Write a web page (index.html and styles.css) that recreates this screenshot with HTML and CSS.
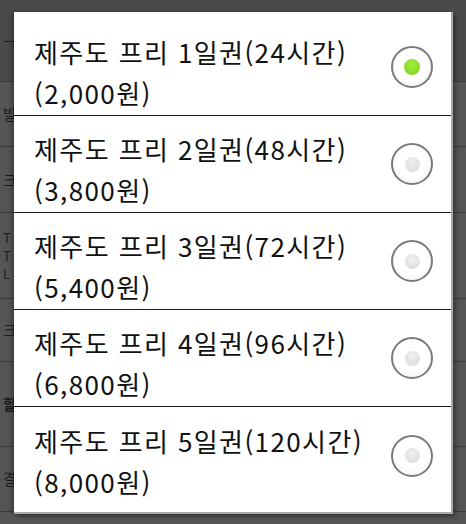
FILE: index.html
```html
<!DOCTYPE html>
<html lang="ko">
<head>
    <meta charset="UTF-8">
    <meta name="viewport" content="width=device-width, initial-scale=1.0">
    <title>제주도 프리 이용권</title>
    <link rel="stylesheet" href="styles.css">
</head>
<body>
    <!-- page behind the dialog, dimmed -->
    <div class="page">
        <div class="page-row row-a"><span>ㅡ</span></div>
        <div class="page-row row-b"><span>발권</span></div>
        <div class="page-row row-c"><span>크기</span></div>
        <div class="page-row row-d"><span>T<br>T<br>L</span></div>
        <div class="page-row row-e"><span>크기</span></div>
        <div class="page-row row-f"><span class="bold">할인</span></div>
        <div class="page-row row-g"><span>결제</span></div>
    </div>

    <div class="dialog">
        <ul class="ticket-list">
            <li class="ticket">
                <p class="ticket-name">제주도 프리 1일권(24시간)<br>(2,000원)</p>
                <span class="radio checked"></span>
            </li>
            <li class="ticket">
                <p class="ticket-name">제주도 프리 2일권(48시간)<br>(3,800원)</p>
                <span class="radio"></span>
            </li>
            <li class="ticket">
                <p class="ticket-name">제주도 프리 3일권(72시간)<br>(5,400원)</p>
                <span class="radio"></span>
            </li>
            <li class="ticket">
                <p class="ticket-name">제주도 프리 4일권(96시간)<br>(6,800원)</p>
                <span class="radio"></span>
            </li>
            <li class="ticket">
                <p class="ticket-name">제주도 프리 5일권(120시간)<br>(8,000원)</p>
                <span class="radio"></span>
            </li>
        </ul>
    </div>
</body>
</html>
```

FILE: styles.css
```css
* {
    margin: 0;
    padding: 0;
    box-sizing: border-box;
}

body {
    width: 466px;
    height: 524px;
    overflow: hidden;
    position: relative;
    background-color: #4b4b4b;
    font-family: "Noto Sans CJK KR", "Noto Sans", sans-serif;
}

/* dimmed page underneath */
.page {
    height: 524px;
    background-color: #555;
}

.page-row {
    display: flex;
    align-items: center;
    padding-left: 3px;
    border-bottom: 1px solid #3a3a3a;
    color: #1e1e1e;
    font-size: 15px;
    line-height: 18px;
}

.page-row .bold {
    font-weight: bold;
}

.row-a { height: 82px; background-color: #4a4a4a; }
.row-b { height: 65px; }
.row-c { height: 66px; }
.row-d { height: 86px; font-size: 13px; }
.row-e { height: 63px; }
.row-f { height: 85px; }
.row-g { height: 65px; }

/* the dialog lies over the page */
.dialog {
    position: absolute;
    left: 14px;
    top: 12px;
    width: 439px;
    height: 502px;
    background-color: #fff;
    border-right: 2px solid #a9a9a9;
    border-bottom: 2px solid #a9a9a9;
    box-shadow: -3px 0 4px rgba(0, 0, 0, 0.25), 3px 3px 4px rgba(0, 0, 0, 0.3);
}

.ticket-list {
    list-style: none;
    padding: 7px 0;
}

.ticket {
    height: 97px;
    display: flex;
    align-items: center;
    justify-content: space-between;
    padding: 0 18px 0 20px;
    border-bottom: 1px solid #1a1a1a;
}

.ticket:last-child {
    border-bottom: none;
}

.ticket-name {
    font-size: 26px;
    letter-spacing: 1.4px;
    line-height: 41px;
    color: #111;
    padding-top: 10px;
}

.radio {
    width: 42px;
    height: 42px;
    border-radius: 50%;
    border: 2px solid #7a7a7a;
    background: radial-gradient(circle at 50% 40%, #fff 55%, #eee 100%);
    display: flex;
    align-items: center;
    justify-content: center;
}

.radio::after {
    content: "";
    width: 15px;
    height: 15px;
    border-radius: 50%;
    background: radial-gradient(circle at 50% 35%, #f0f0f0, #d8d8d8);
}

.radio.checked::after {
    width: 16px;
    height: 16px;
    background: radial-gradient(circle at 50% 35%, #a4ec3c, #7ccf1e);
}
```
